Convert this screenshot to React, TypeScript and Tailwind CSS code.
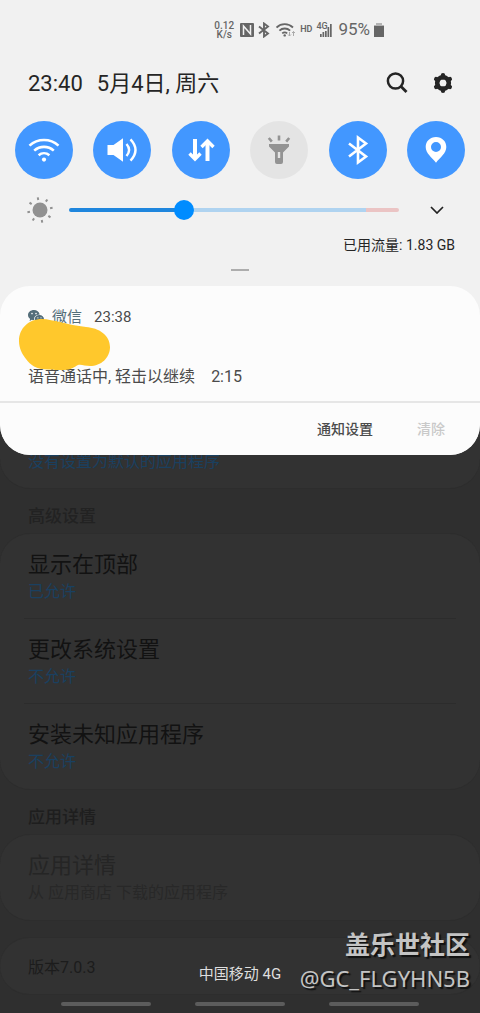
import { useState } from 'react';
import type { CSSProperties, ReactNode } from 'react';

type Tile = {
  label: string;
  active: boolean;
  icon: ReactNode;
};

type SettingItem = {
  title: string;
  detail: string;
};

const TILES: Tile[] = [
  {
    label: 'WLAN',
    active: true,
    icon: (
      <svg viewBox="0 0 34 34" className="size-[34px]" fill="none" stroke="currentColor" strokeWidth="2.6">
        <path d="M2.5 12.6a21.5 21.5 0 0 1 29 0" />
        <path d="M7.2 17.6a14.8 14.8 0 0 1 19.6 0" />
        <path d="M11.6 22.2a8.6 8.6 0 0 1 10.8 0" />
        <circle cx="17" cy="26.6" r="2.1" fill="currentColor" stroke="none" />
      </svg>
    ),
  },
  {
    label: '声音',
    active: true,
    icon: (
      <svg viewBox="0 0 34 34" className="size-[34px]" fill="none" stroke="currentColor" strokeWidth="2.4">
        <path d="M2.5 12h6L18 5.2v23.6L8.5 22h-6z" fill="currentColor" stroke="none" />
        <path d="M21.5 11q5.2 6 0 12" />
        <path d="M25.5 6.4q10 10.600 0 21.200" />
      </svg>
    ),
  },
  {
    label: '移动数据',
    active: true,
    icon: (
      <svg viewBox="0 0 34 34" className="size-[34px]" fill="none" stroke="currentColor">
        <path d="M11 6v19M23.5 28V9" strokeWidth="4" />
        <path d="M5.500 20.500l5.500 5.500 5.500-5.500M17.500 14l6-6 6 6" strokeWidth="3.400" />
      </svg>
    ),
  },
  {
    label: '手电筒',
    active: false,
    icon: (
      <svg viewBox="0 0 34 34" className="size-[34px]" fill="none" stroke="currentColor" strokeWidth="2.600">
        <path d="M17 2.500v5M6.800 5l3 3.600M27.200 5l-3 3.600" />
        <path
          d="M7 11h20v2.500l-6 6V29q0 2-2 2h-4q-2 0-2-2v-9.500l-6-6zM15.800 19v6h2.400v-6z"
          fill="currentColor"
          fillRule="evenodd"
          stroke="none"
        />
      </svg>
    ),
  },
  {
    label: '蓝牙',
    active: true,
    icon: (
      <svg viewBox="0 0 34 34" className="size-[34px]" fill="none" stroke="currentColor" strokeWidth="2.600">
        <path d="M8 10.500L25 23.500l-8 6v-25l8 6L8 23.500" />
      </svg>
    ),
  },
  {
    label: '定位',
    active: true,
    icon: (
      <svg viewBox="0 0 34 34" className="size-[34px]" fill="currentColor">
        <path
          fillRule="evenodd"
          d="M17 4C11 4 6.700 8.400 6.700 14c0 6.500 6.300 10.500 10.300 15.700C21 24.500 27.300 20.500 27.300 14c0-5.600-4.300-10-10.300-10zm0 5a5 5 0 1 1 0 10 5 5 0 0 1 0-10z"
        />
      </svg>
    ),
  },
];

const ADVANCED: SettingItem[] = [
  { title: '显示在顶部', detail: '已允许' },
  { title: '更改系统设置', detail: '不允许' },
  { title: '安装未知应用程序', detail: '不允许' },
];

const SUN_RAYS = [0, 45, 90, 135, 180, 225, 270, 315];

function StatusBar() {
  return (
    <div className="flex h-[60px] items-center justify-end pr-24 text-[#666]">
      <div className="text-center text-[10px] leading-[9px] font-medium">
        <div>0.12</div>
        <div>K/s</div>
      </div>
      <svg viewBox="0 0 14 14" className="ml-1.5 size-3.5">
        <rect width="14" height="14" rx="1" fill="currentColor" />
        <path d="M3.500 12V3l7 8V2" fill="none" stroke="#f1f1f1" strokeWidth="1.500" />
      </svg>
      <svg viewBox="0 0 12 16" className="ml-1 h-4 w-3" fill="none" stroke="currentColor" strokeWidth="1.900">
        <path d="M1 4.500l9 7-4 3V1.500l4 3-9 7" />
      </svg>
      <svg viewBox="0 0 20 16" className="ml-1.5 h-4 w-5" fill="none" stroke="currentColor" strokeWidth="1.800">
        <path d="M.5 5.500a12 12 0 0 1 16.500 0M3.400 8.600a7.800 7.800 0 0 1 10.700 0M6.200 11.400a4 4 0 0 1 5 0" />
        <circle cx="8.700" cy="13.400" r="1.200" fill="currentColor" stroke="none" />
        <path d="M13.500 10v4m-1.500-1.500l1.500 1.500 1.500-1.500M17.500 14v-4.500m-1.500 1.500l1.500-1.500 1.500 1.500" stroke="#aaa" strokeWidth="1" />
      </svg>
      <span className="ml-1 text-[9px] font-semibold">HD</span>
      <div className="relative ml-1 h-4 w-4">
        <span className="absolute top-0 left-0 text-[9px] leading-[9px] font-medium">4G</span>
        <svg viewBox="0 0 16 16" className="size-4" fill="currentColor">
          <path d="M4 12h1.700v3H4zM6.500 10h1.700v5H6.500zM9 9h1.700v6H9zM11.500 5h1.700v10h-1.700zM14 2h1.700v13H14z" />
        </svg>
      </div>
      <span className="ml-1.5 text-[17px]">95%</span>
      <svg viewBox="0 0 10 14" className="ml-1 h-3.5 w-2.5">
        <path d="M2 0h6v2h2v2H0V2h2z" fill="#b5b5b5" />
        <path d="M0 3h10v11H0z" fill="currentColor" />
      </svg>
    </div>
  );
}

function Brightness() {
  const [level, setLevel] = useState(34);

  return (
    <div className="flex h-8 items-center pr-8 pl-[26px]">
      <svg viewBox="0 0 28 28" className="size-7 text-[#919191]" stroke="currentColor" strokeWidth="2">
        <circle cx="14" cy="14" r="7.500" fill="currentColor" stroke="none" />
        {SUN_RAYS.map((angle) => (
          <path key={angle} d="M14 1.200v2.600" transform={`rotate(${angle - 10} 14 14)`} />
        ))}
      </svg>
      <input
        type="range"
        min={0}
        max={100}
        value={level}
        onChange={(e) => setLevel(Number(e.target.value))}
        aria-label="亮度"
        style={{ '--level': `${level}%` } as CSSProperties}
        className="ml-[15px] h-5 min-w-0 flex-1 appearance-none bg-transparent [&::-webkit-slider-runnable-track]:h-1 [&::-webkit-slider-runnable-track]:rounded-full [&::-webkit-slider-runnable-track]:bg-[linear-gradient(to_right,#1f86dd_var(--level),#afd3f0_var(--level),#afd3f0_90%,#ebc4c4_90%)] [&::-webkit-slider-thumb]:-mt-2 [&::-webkit-slider-thumb]:size-5 [&::-webkit-slider-thumb]:appearance-none [&::-webkit-slider-thumb]:rounded-full [&::-webkit-slider-thumb]:bg-[#008cff]"
      />
      <button type="button" aria-label="展开" className="ml-[27px] flex size-[22px] items-center justify-center text-[#222]">
        <svg viewBox="0 0 14 8" className="h-2 w-3.5" fill="none" stroke="currentColor" strokeWidth="1.700">
          <path d="M1 1l6 6 6-6" />
        </svg>
      </button>
    </div>
  );
}

function QuickPanel() {
  return (
    <header className="text-[#252525]">
      <StatusBar />
      <div className="flex h-[46px] items-center pr-[26px] pl-7 text-[22px]">
        <span>23:40</span>
        <span className="ml-3.5 flex-1">5月4日, 周六</span>
        <button type="button" aria-label="搜索">
          <svg viewBox="0 0 22 22" className="size-[22px]" fill="none" stroke="currentColor" strokeWidth="2.500">
            <circle cx="9.500" cy="9" r="7.600" />
            <path d="M14.800 14.300l5.700 5.700" strokeWidth="2.800" />
          </svg>
        </button>
        <button type="button" aria-label="设置" className="ml-6">
          <svg viewBox="0 0 22 22" className="size-[22px]" fill="none" stroke="currentColor">
            <circle cx="11" cy="11" r="5.800" strokeWidth="4.600" />
            <path
              d="M11 3.200v2M11 16.800v2M4.200 7.100l1.800 1M16 13.900l1.800 1M4.200 14.900l1.800-1M16 8.100l1.800-1"
              strokeWidth="4.400"
              strokeLinecap="round"
            />
          </svg>
        </button>
      </div>
      <div className="mt-[15px] flex justify-between px-[15px]">
        {TILES.map((tile) => (
          <button
            key={tile.label}
            type="button"
            aria-label={tile.label}
            aria-pressed={tile.active}
            className={`flex size-[58px] items-center justify-center rounded-full ${
              tile.active ? 'bg-[#4297ff] text-white' : 'bg-[#e4e4e4] text-[#939393]'
            }`}
          >
            {tile.icon}
          </button>
        ))}
      </div>
      <div className="mt-[15px]">
        <Brightness />
      </div>
      <p className="mt-2 pr-[25px] text-right text-[14px] leading-[22px]">已用流量: 1.83 GB</p>
      <div className="mx-auto mt-[13px] h-0.5 w-[18px] bg-[#adadad]" />
    </header>
  );
}

function Notification() {
  return (
    <article className="relative mt-[15px] rounded-[30px] bg-[#fcfcfc]">
      <div className="h-[115px] px-7 pt-[21px]">
        <div className="flex items-center text-[15px] leading-5 text-[#4b4b4b]">
          <svg viewBox="0 0 16 14" className="size-4 text-[#546e7a]" fill="currentColor">
            <path d="M6 0C2.600 0 0 2.200 0 5c0 1.600.8 2.900 2.100 3.900L1.600 11l2.200-1.200c.8.200 1.500.3 2.400.2C5.500 6.800 8 4.500 11.700 4.400 11.100 1.800 8.800 0 6 0z" />
            <path d="M11.400 5C8.700 5 6.700 6.800 6.700 9s2 4 4.700 4c.6 0 1.200-.1 1.700-.3l1.600.9-.4-1.500c1-.7 1.700-1.800 1.700-3.100C16 6.800 14 5 11.400 5z" />
            <g fill="#fcfcfc">
              <circle cx="4" cy="3.600" r=".8" />
              <circle cx="8" cy="3.600" r=".8" />
              <circle cx="9.900" cy="7.800" r=".6" />
              <circle cx="13" cy="7.800" r=".6" />
            </g>
          </svg>
          <span className="ml-2 text-[#546e7a]">微信</span>
          <span className="ml-3">23:38</span>
        </div>
        <p className="mt-10 text-[16px] leading-5 text-[#4b4b4b]">
          语音通话中, 轻击以继续<span className="ml-4">2:15</span>
        </p>
      </div>
      <div className="h-0.5 bg-[#e6e6e6]" />
      <div className="flex h-[52px] items-center justify-end gap-11 pr-[35px] text-[14px] font-medium">
        <button type="button" className="text-[#4b4b4b]">
          通知设置
        </button>
        <button type="button" disabled className="text-[#c9c9c9]">
          清除
        </button>
      </div>
      <svg viewBox="0 0 92 54" className="absolute top-8 left-[18px] h-[54px] w-[92px]" fill="#ffc82c">
        <path d="M1 23C1 10 11 1 24 1c6 0 12 2 18 3 8 2 17 4 26 5 13 1 24 8 24 20 0 11-9 19-20 19-5 0-9-2-12-1-4 2-7 5-14 5-6 0-8 0-14-.5C19 52 12 47 8 41 4 36 1 30 1 23z" />
      </svg>
    </article>
  );
}

function SettingRow({ title, detail, disabled }: SettingItem & { disabled?: boolean }) {
  return (
    <button
      type="button"
      disabled={disabled}
      className={`block h-[85px] w-full px-7 pt-px text-left ${disabled ? 'text-[#252525]' : 'text-[#121212]'}`}
    >
      <span className="block text-[22px] leading-[30px]">{title}</span>
      <span className={`block text-[16px] leading-6 ${disabled ? 'text-[#282828]' : 'text-[#1a4060]'}`}>
        {detail}
      </span>
    </button>
  );
}

function AppSettings() {
  return (
    <main className="-mt-[30px]">
      <section className="rounded-b-[30px] border-b border-[#2d2d2d] bg-[#323232] px-7 pt-[26px] pb-[15px]">
        <p className="text-[16px] leading-[22px] text-[#1a4060]">没有设置为默认的应用程序</p>
      </section>
      <h2 className="px-7 pt-4 pb-1.5 text-[17px] leading-[22px] font-medium text-[#222]">高级设置</h2>
      <section className="rounded-[30px] border-y border-[#2d2d2d] bg-[#323232]">
        {ADVANCED.map((item, i) => (
          <div key={item.title}>
            {i > 0 ? <div className="mx-6 -mt-px h-px bg-[#2c2c2c]" /> : null}
            <SettingRow {...item} />
          </div>
        ))}
      </section>
      <h2 className="px-7 pt-4 pb-1.5 text-[17px] leading-[22px] font-medium text-[#1e1e1e]">应用详情</h2>
      <section className="rounded-[30px] border-y border-[#2d2d2d] bg-[#323232]">
        <SettingRow title="应用详情" detail="从 应用商店 下载的应用程序" disabled />
      </section>
      <section className="mt-4 rounded-[30px] border-y border-[#2d2d2d] bg-[#323232] px-7 pt-[18px] pb-3.5">
        <p className="text-[16px] leading-6 text-[#1c1c1c]">版本7.0.3</p>
      </section>
    </main>
  );
}

export default function App() {
  return (
    <div className="relative bg-[#2f2f2f] font-[Roboto,'Noto_Sans_CJK_SC',sans-serif]">
      <div className="relative z-10 overflow-hidden rounded-b-[30px] bg-[#f1f1f1]">
        <QuickPanel />
        <Notification />
      </div>
      <AppSettings />
      <nav className="flex h-[18px] items-center justify-center gap-11">
        <button type="button" aria-label="最近" className="h-1 w-[90px] rounded-full bg-[#5c5c5c]" />
        <button type="button" aria-label="主页" className="h-1 w-[90px] rounded-full bg-[#5c5c5c]" />
        <button type="button" aria-label="返回" className="h-1 w-[90px] rounded-full bg-[#5c5c5c]" />
      </nav>
      <p className="absolute inset-x-0 bottom-7 text-center text-[15px] leading-[22px] text-[#dedede]">
        中国移动 4G
      </p>
      <div className="absolute right-2.5 bottom-5 text-right text-[#c4c4c4] [text-shadow:2px_2px_1px_#111]">
        <p className="text-[25px] leading-[34px] font-bold">盖乐世社区</p>
        <p className="font-['Noto_Sans',sans-serif] text-[22px] leading-[30px]">@GC_FLGYHN5B</p>
      </div>
    </div>
  );
}
